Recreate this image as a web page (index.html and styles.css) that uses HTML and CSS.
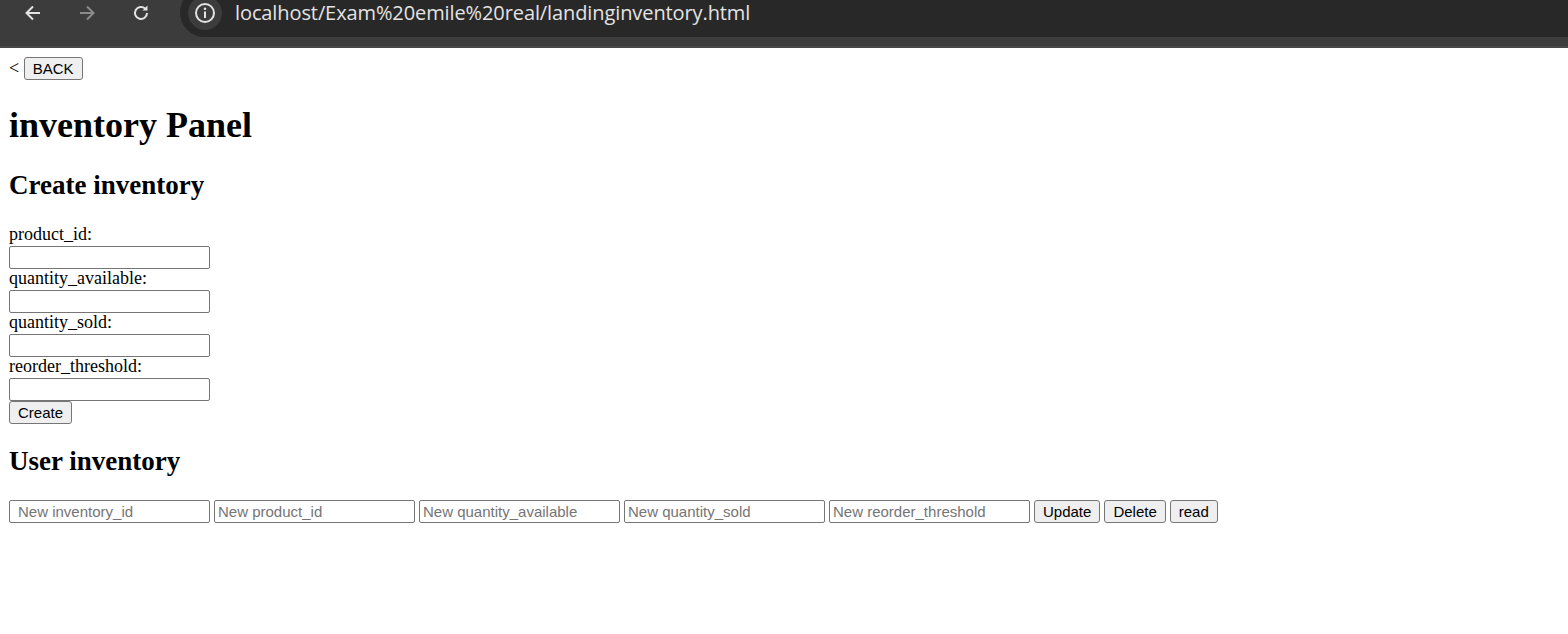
FILE: index.html
```html
<!DOCTYPE html>
<html>
<head>
<meta charset="utf-8">
<title>inventory Panel</title>
<link rel="stylesheet" href="styles.css">
</head>
<body>
<div class="chrome">
  <div class="nav">
    <span class="navbtn">
      <svg width="18" height="18" viewBox="0 0 18 18"><path d="M16 9H3M9 2.5L2.5 9 9 15.5" fill="none" stroke="#e3e3e3" stroke-width="2"/></svg>
    </span>
    <span class="navbtn">
      <svg width="18" height="18" viewBox="0 0 18 18"><path d="M2 9h13M9 2.5L15.5 9 9 15.5" fill="none" stroke="#8b8b8b" stroke-width="2"/></svg>
    </span>
    <span class="navbtn">
      <svg width="20" height="20" viewBox="0 0 20 20"><path d="M16 10a6 6 0 1 1-1.9-4.4" fill="none" stroke="#e3e3e3" stroke-width="2"/><path d="M16.5 2.5v5h-5z" fill="#e3e3e3"/></svg>
    </span>
  </div>
  <div class="omnibox">
    <span class="info">
      <svg width="22" height="22" viewBox="0 0 22 22"><circle cx="11" cy="11" r="9" fill="none" stroke="#e3e3e3" stroke-width="2"/><rect x="10" y="9.5" width="2" height="6.5" fill="#e3e3e3"/><circle cx="11" cy="6.8" r="1.3" fill="#e3e3e3"/></svg>
    </span>
    <span class="url">localhost/Exam%20emile%20real/landinginventory.html</span>
  </div>
</div>
<div class="strip"></div>
<main class="page">
  <div class="backrow">&lt; <button class="btn">BACK</button></div>
  <h1 class="title">inventory Panel</h1>
  <h2 class="sub">Create inventory</h2>
  <form class="create">
    <label class="lbl">product_id:</label>
    <input class="field" type="text">
    <label class="lbl">quantity_available:</label>
    <input class="field" type="text">
    <label class="lbl">quantity_sold:</label>
    <input class="field" type="text">
    <label class="lbl">reorder_threshold:</label>
    <input class="field" type="text">
    <div><button class="btn" type="button">Create</button></div>
  </form>
  <h2 class="sub">User inventory</h2>
  <div class="row">
    <input class="field first" type="text" placeholder="New inventory_id">
    <input class="field" type="text" placeholder="New product_id">
    <input class="field" type="text" placeholder="New quantity_available">
    <input class="field" type="text" placeholder="New quantity_sold">
    <input class="field" type="text" placeholder="New reorder_threshold">
    <button class="btn">Update</button>
    <button class="btn">Delete</button>
    <button class="btn">read</button>
  </div>
</main>
</body>
</html>
```
FILE: styles.css
```css
html, body {
  margin: 0;
  padding: 0;
  background: #ffffff;
}
body {
  font-family: "Liberation Serif", "Times New Roman", serif;
  font-size: 18px;
  color: #000;
}
.chrome {
  height: 37px;
  background: #3c3c3c;
  display: flex;
  align-items: flex-start;
  overflow: hidden;
}
.nav {
  display: flex;
  width: 180px;
  height: 25px;
  align-items: center;
}
.navbtn {
  width: 54px;
  display: flex;
  justify-content: center;
}
.navbtn:first-child {
  margin-left: 6px;
}
.omnibox {
  flex: 1;
  height: 49px;
  margin-top: -12px;
  background: #282828;
  border-radius: 25px 0 0 25px;
  display: flex;
  align-items: center;
}
.info {
  width: 34px;
  height: 34px;
  margin-left: 8px;
  border-radius: 50%;
  background: #3c3c3c;
  display: flex;
  align-items: center;
  justify-content: center;
}
.url {
  margin-left: 13px;
  margin-top: -1px;
  color: #e3e3e3;
  font-family: "Open Sans", "Noto Sans", sans-serif;
  font-size: 20px;
  letter-spacing: -0.1px;
}
.strip {
  height: 9px;
  background: #3c3c3c;
  border-bottom: 2px solid #474747;
}
.page {
  padding: 9px;
}
.backrow {
  height: 23px;
  line-height: 23px;
}
.btn {
  font-family: "Liberation Sans", Arial, sans-serif;
  font-size: 15px;
  height: 23px;
  padding: 0 8px;
  border: 1px solid #767676;
  border-radius: 3px;
  background: #efefef;
  color: #000;
  vertical-align: top;
}
.title {
  font-size: 36px;
  font-weight: bold;
  margin: 24px 0;
}
.sub {
  font-size: 27px;
  font-weight: bold;
  margin: 22.4px 0;
}
.create {
  margin-top: 24px;
}
.lbl {
  display: block;
  height: 21px;
  line-height: 19px;
}
.field {
  display: block;
  box-sizing: border-box;
  width: 201px;
  height: 23px;
  border: 1px solid #767676;
  border-radius: 2px;
  padding: 0 3px;
  font-family: "Liberation Sans", Arial, sans-serif;
  font-size: 15px;
  margin: 0;
  background: #fff;
}
.field::placeholder {
  color: #757575;
}
.row {
  display: flex;
  gap: 4px;
}
.row .field.first {
  padding-left: 8px;
}
```
